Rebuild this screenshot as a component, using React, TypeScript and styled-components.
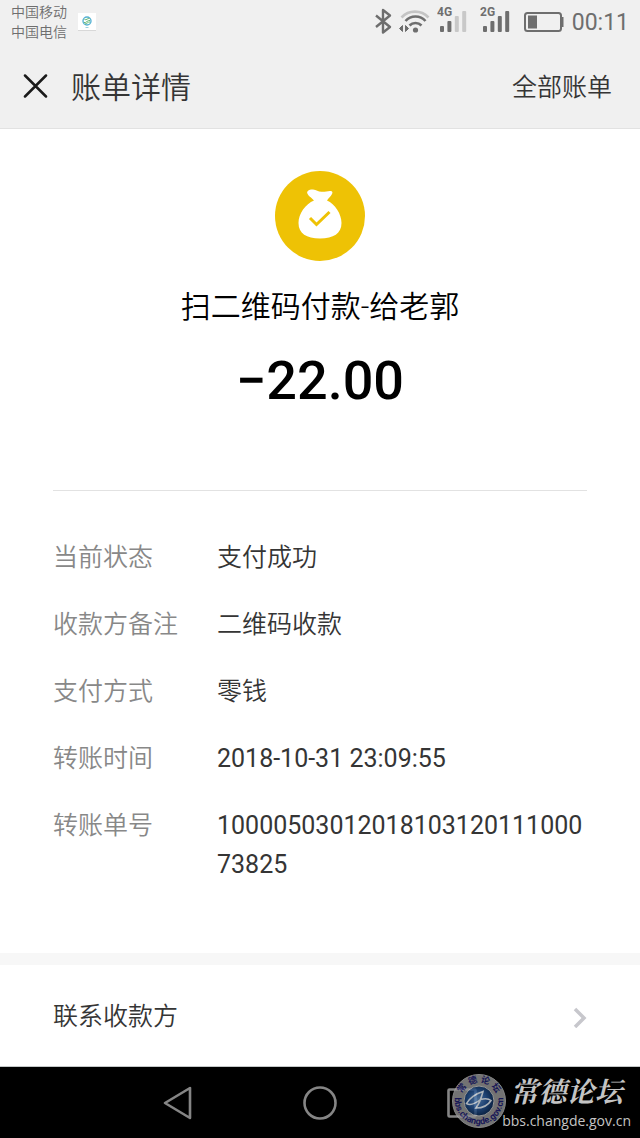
import React from "react";
import styled, { createGlobalStyle } from "styled-components";

const GlobalStyle = createGlobalStyle`
  *, *::before, *::after { box-sizing: border-box; }
  body {
    margin: 0;
    background: #fff;
    color: #353535;
    font-family: Roboto, "Noto Sans CJK SC", sans-serif;
  }
  button { font: inherit; color: inherit; background: none; border: 0; padding: 0; cursor: pointer; }
  svg { display: block; flex: none; }
`;

const Page = styled.div`
  display: flex;
  flex-direction: column;
  min-height: 100vh;
`;

const StatusBar = styled.div`
  display: flex;
  justify-content: space-between;
  height: 44px;
  padding: 2px 11px;
  background: #f0f0f0;
  color: #6e6e6e;
`;

const Carriers = styled.div`
  display: flex;
  align-items: center;
  gap: 11px;
  font-size: 14px;
  font-weight: 350;
  line-height: 20px;
`;

const Indicators = styled.div`
  display: flex;
  align-items: center;
`;

const Clock = styled.time`
  padding: 2px 0 0 8px;
  font-size: 23px;
  line-height: 40px;
`;

const Header = styled.header`
  display: flex;
  align-items: center;
  height: 85px;
  padding: 0 28px 0 23px;
  background: #f0f0f0;
  border-bottom: 1px solid #e2e2e2;
`;

const Title = styled.h1`
  flex: 1;
  margin: 0 0 0 23px;
  padding-top: 3px;
  font-size: 30px;
  font-weight: 350;
  line-height: 40px;
`;

const HeaderLink = styled.a`
  padding-top: 3px;
  color: inherit;
  font-size: 25px;
  font-weight: 350;
  line-height: 40px;
  text-decoration: none;
`;

const Main = styled.main`
  flex: 1;
`;

const Hero = styled.section`
  display: flex;
  flex-direction: column;
  align-items: center;
  margin: 0 53px;
  padding: 42px 0 77px;
  border-bottom: 1px solid #e2e2e2;
  color: #000;
`;

const Payee = styled.h2`
  margin: 26px 0 22px;
  font-size: 30px;
  font-weight: 350;
  line-height: 40px;
`;

const Amount = styled.p`
  margin: 0;
  font-size: 54px;
  font-weight: 500;
  line-height: 64px;
`;

const Details = styled.dl`
  display: grid;
  grid-template-columns: 164px 1fr;
  row-gap: 28px;
  margin: 0;
  padding: 47px 53px 69px;
  font-size: 25px;
  line-height: 39px;
`;

const Label = styled.dt`
  color: #888;
  font-weight: 350;
`;

const Value = styled.dd<{ $numeric?: boolean }>`
  margin: 0;
  font-weight: ${({ $numeric }) => ($numeric ? 400 : 350)};
  word-break: break-all;
`;

const ContactRow = styled.button`
  display: flex;
  align-items: center;
  justify-content: space-between;
  width: 100%;
  height: 114px;
  padding: 3px 53px 0;
  border-top: 12px solid #f7f7f7;
  border-bottom: 1px solid #c4c8c8;
  font-size: 25px;
  font-weight: 350;
  line-height: 40px;
`;

const NavBar = styled.nav`
  position: relative;
  display: flex;
  justify-content: center;
  height: 71px;
  background: #000;
`;

const NavButton = styled.button`
  display: flex;
  align-items: center;
  justify-content: center;
  width: 142px;
`;

const Watermark = styled.div`
  position: absolute;
  top: 3px;
  right: 9px;
  display: flex;
  align-items: center;
  color: #c4c4c4;
`;

const ForumName = styled.div`
  display: flex;
  flex-direction: column;
  align-items: center;
  margin-left: -4px;
`;

const ForumTitle = styled.span`
  font-family: "Noto Serif CJK SC", "Noto Sans CJK SC", serif;
  font-size: 28px;
  font-style: italic;
  font-weight: 700;
  line-height: 41px;
`;

const ForumUrl = styled.span`
  font-family: "Open Sans", sans-serif;
  font-size: 14px;
  line-height: 20px;
`;

const CarrierLogo = () => (
  <svg width="18" height="18" viewBox="0 0 18 18" aria-hidden="true">
    <rect width="18" height="18" fill="#fff" />
    <path d="M0 17.500h18" stroke="#d8d8d8" />
    <circle cx="9" cy="8" r="4" fill="none" stroke="#58b3d3" strokeWidth="1.400" />
    <path d="M6 9.500c2 1 4-3 6-2M6.500 6.500c2 1 3-1.500 5-1M7 11c2 0 3-2.500 5-2" fill="none" stroke="#65b774" />
    <path d="M7.500 14.500h3" stroke="#9ad0df" />
  </svg>
);

const Bluetooth = () => (
  <svg width="24" height="40" viewBox="0 0 24 40" fill="none" stroke="#6e6e6e" strokeWidth="2.400" aria-label="蓝牙" role="img">
    <path d="M1 13.500L15 25l-7 5.500V8l7 5.500L1 25" strokeLinejoin="round" />
  </svg>
);

const Wifi = () => (
  <svg width="38" height="40" viewBox="0 0 38 40" fill="none" strokeWidth="2.600" aria-label="无线网络" role="img">
    <path d="M2.500 15.500a18.500 18.500 0 0 1 27 0" stroke="#c4c4c4" />
    <path d="M6.500 19a13.500 13.500 0 0 1 20 0M10.500 23.500a8.500 8.500 0 0 1 12 0" stroke="#6e6e6e" />
    <circle cx="16.500" cy="28" r="2.600" fill="#6e6e6e" />
    <path d="M3.500 23.500v6L.5 26.500zM6.500 23.500v6l3-3z" fill="#6e6e6e" stroke="#6e6e6e" strokeWidth="1" />
  </svg>
);

const Signal = ({ network, level }: { network: string; level: number }) => (
  <svg width="43" height="40" viewBox="0 0 43 40" role="img" aria-label={`${network} 信号`}>
    <text x="0" y="14" fontSize="12" fontWeight="700" fill="#6e6e6e">{network}</text>
    {[6, 11, 16, 21].map((height, i) => (
      <rect key={height} x={3 + i * 7.4} y={30 - height} width="4" height={height} rx="1" fill={i < level ? "#6e6e6e" : "#c8c8c8"} />
    ))}
  </svg>
);

const Battery = () => (
  <svg width="41" height="40" viewBox="0 0 41 40" role="img" aria-label="电量">
    <rect x="2" y="11" width="36" height="18" rx="2.500" fill="none" stroke="#6e6e6e" strokeWidth="2" />
    <path d="M38 15h2.500v10H38z" fill="#6e6e6e" />
    <rect x="5" y="13.500" width="9" height="13" fill="#6e6e6e" />
  </svg>
);

const CloseIcon = () => (
  <svg width="25" height="25" viewBox="0 0 25 25" stroke="#1a1a1a" strokeWidth="2.500" strokeLinecap="round" aria-hidden="true">
    <path d="M2 1.500l21 21M23 1.500L2 22.500" />
  </svg>
);

const MoneyBag = () => (
  <svg width="90" height="90" viewBox="0 0 90 90" aria-hidden="true">
    <circle cx="45" cy="45" r="45" fill="#eec205" />
    <path
      fill="#fff"
      d="M39 29.500c-2.500-3-6-4.500-6.800-7.500-.6-2.400 3-4 5.800-3.500 3.500.5 5 2 8.500 2.300 3.500.3 6-1 9-.8 2 .2 2.400 1.500 1.500 3-1.200 2.300-3.500 4.200-5 6.500 8 3.500 14.500 13.500 14.500 22.500 0 10.500-8 15.500-21.500 15.500S23.500 62.500 23.500 52c0-9.500 7-19 15.500-22.500z"
    />
    <path d="M35 47l6.500 6.500L54.500 41" fill="none" stroke="#eec205" strokeWidth="3" />
  </svg>
);

const Chevron = () => (
  <svg width="14" height="22" viewBox="0 0 14 22" fill="none" stroke="#c7c7cc" strokeWidth="3.500" aria-hidden="true">
    <path d="M2 3l9 9-9 9" />
  </svg>
);

const ForumLogo = () => (
  <svg width="54" height="56" viewBox="0 0 54 56" opacity="0.800" aria-hidden="true">
    <defs>
      <radialGradient id="globe" cx="45%" cy="45%" r="60%">
        <stop offset="0" stopColor="#5c88bc" />
        <stop offset="0.500" stopColor="#265390" />
        <stop offset="1" stopColor="#0a2448" />
      </radialGradient>
      <path id="upperArc" d="M9.500 34A18.500 18.500 0 1 1 44.500 34" />
      <path id="lowerArc" d="M3 24A24.200 24.200 0 1 0 51 24" />
    </defs>
    <circle cx="27" cy="28" r="26.500" fill="#909090" stroke="#a8a8a8" />
    <circle cx="27" cy="28" r="15" fill="url(#globe)" stroke="#bcbcbc" />
    <path
      d="M31 18.500c-7 2-14 7-16.500 12 4 2.500 9 0 14-4 4-1 8-1 10.500 1-3 5-9 7.500-15 7.500 3-4 5-9 7-16.500z"
      fill="none"
      stroke="#d8e0e8"
      strokeWidth="1.600"
    />
    <text fontSize="9" fontWeight="700" fill="#1c1c6c">
      <textPath href="#upperArc" startOffset="50%" textAnchor="middle">常 德 论 坛</textPath>
    </text>
    <text fontSize="9" fontWeight="700" fill="#1c1c6c">
      <textPath href="#lowerArc" startOffset="50%" textAnchor="middle">bbs.changde.gov.cn</textPath>
    </text>
  </svg>
);

const details = [
  { label: "当前状态", value: "支付成功" },
  { label: "收款方备注", value: "二维码收款" },
  { label: "支付方式", value: "零钱" },
  { label: "转账时间", value: "2018-10-31 23:09:55", numeric: true },
  { label: "转账单号", value: "1000050301201810312011100073825", numeric: true },
];

export default function App() {
  return (
    <Page>
      <GlobalStyle />
      <StatusBar>
        <Carriers>
          <div>
            <div>中国移动</div>
            <div>中国电信</div>
          </div>
          <CarrierLogo />
        </Carriers>
        <Indicators>
          <Bluetooth />
          <Wifi />
          <Signal network="4G" level={2} />
          <Signal network="2G" level={4} />
          <Battery />
          <Clock>00:11</Clock>
        </Indicators>
      </StatusBar>
      <Header>
        <button type="button" aria-label="关闭"><CloseIcon /></button>
        <Title>账单详情</Title>
        <HeaderLink href="#bills">全部账单</HeaderLink>
      </Header>
      <Main>
        <Hero>
          <MoneyBag />
          <Payee>扫二维码付款-给老郭</Payee>
          <Amount>−22.00</Amount>
        </Hero>
        <Details>
          {details.map(({ label, value, numeric }) => (
            <React.Fragment key={label}>
              <Label>{label}</Label>
              <Value $numeric={numeric}>{value}</Value>
            </React.Fragment>
          ))}
        </Details>
        <ContactRow type="button">
          联系收款方
          <Chevron />
        </ContactRow>
      </Main>
      <NavBar>
        <NavButton type="button" aria-label="返回">
          <svg width="30" height="34" viewBox="0 0 30 34" fill="none" stroke="#858585" strokeWidth="2.600" strokeLinejoin="round">
            <path d="M27 2v30L2 17z" />
          </svg>
        </NavButton>
        <NavButton type="button" aria-label="主页">
          <svg width="34" height="34" viewBox="0 0 34 34" fill="none" stroke="#858585" strokeWidth="2.600">
            <circle cx="17" cy="17" r="15.500" />
          </svg>
        </NavButton>
        <NavButton type="button" aria-label="最近任务">
          <svg width="30" height="30" viewBox="0 0 30 30" fill="none" stroke="#858585" strokeWidth="2.600">
            <rect x="1.500" y="1.500" width="27" height="27" rx="1" />
          </svg>
        </NavButton>
        <Watermark>
          <ForumLogo />
          <ForumName>
            <ForumTitle>常德论坛</ForumTitle>
            <ForumUrl>bbs.changde.gov.cn</ForumUrl>
          </ForumName>
        </Watermark>
      </NavBar>
    </Page>
  );
}
